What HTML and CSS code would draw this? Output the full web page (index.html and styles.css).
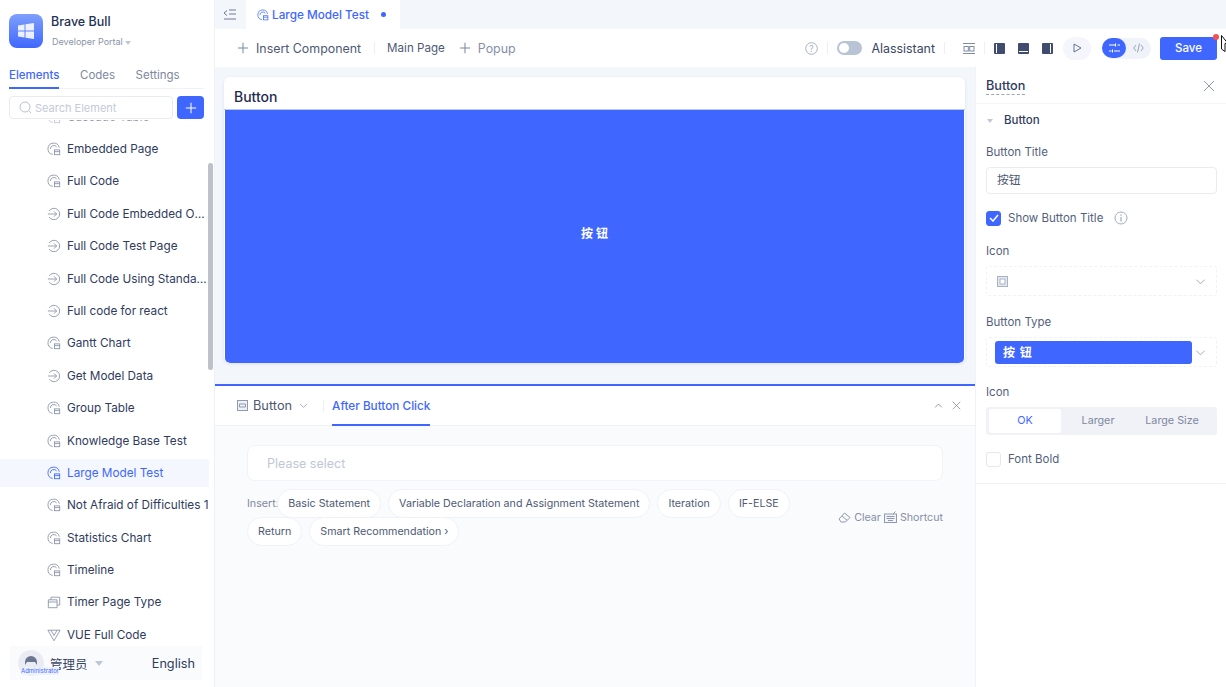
FILE: index.html
```html
<!DOCTYPE html>
<html lang="en">
<head>
    <meta charset="UTF-8">
    <title>Large Model Test</title>
    <link rel="stylesheet" href="styles.css">
</head>
<body>
<svg class="defs" width="0" height="0">
    <symbol id="i-page" viewBox="0 0 16 16"><path d="M14 6.5A6.5 6.5 0 1 0 6.5 14.2" fill="none" stroke="currentColor"/><path d="M3.8 8A4 4 0 0 1 11 5.6" fill="none" stroke="currentColor"/><rect x="8.5" y="9" width="6" height="5.5" fill="none" stroke="currentColor"/><path d="M8.5 11h6" stroke="currentColor"/></symbol>
    <symbol id="i-enter" viewBox="0 0 16 16"><path d="M2.5 4.5A6.5 6.5 0 1 1 2.5 11.5" fill="none" stroke="currentColor"/><path d="M1 8h10M8 5l3 3-3 3" fill="none" stroke="currentColor"/></symbol>
    <symbol id="i-timer" viewBox="0 0 16 16"><path d="M1.5 5.5h10v9h-10zM1.5 8h10M4.5 5.5v-3h10v9h-3" fill="none" stroke="currentColor"/></symbol>
    <symbol id="i-vue" viewBox="0 0 16 16"><path d="M1 2.5h14L8 14.5zM4.500 2.500L8 8.500l3.500-6" fill="none" stroke="currentColor"/></symbol>
    <symbol id="i-chev" viewBox="0 0 12 12"><path d="M1.500 4l4.500 4.500L10.500 4" fill="none" stroke="currentColor"/></symbol>
    <symbol id="i-plus" viewBox="0 0 14 14"><path d="M7 1v12M1 7h12" fill="none" stroke="currentColor" stroke-width="1.200"/></symbol>
    <symbol id="i-close" viewBox="0 0 12 12"><path d="M1 1l10 10M11 1L1 11" fill="none" stroke="currentColor"/></symbol>
</svg>

<div class="app">
    <aside class="sidebar">
        <div class="brand">
            <div class="logo">
                <svg width="18" height="18" viewBox="0 0 18 18"><path d="M1 3.500l6.500-1v6H1zM8.500 2.300L17 1v7.500H8.500zM1 9.500h6.500v6L1 14.500zM8.500 9.500H17V17L8.500 15.700z" fill="#fff" fill-opacity=".88"/></svg>
            </div>
            <div>
                <div class="brand-name">Brave Bull</div>
                <div class="brand-sub">Developer Portal <span class="caret"></span></div>
            </div>
        </div>
        <nav class="side-tabs">
            <span class="side-tab active">Elements</span>
            <span class="side-tab">Codes</span>
            <span class="side-tab">Settings</span>
        </nav>
        <div class="search-row">
            <div class="search">
                <svg width="13" height="13" viewBox="0 0 13 13"><circle cx="6" cy="6" r="5" fill="none" stroke="#b9c1d3"/><path d="M9.500 9.500l2.500 2.500" stroke="#b9c1d3"/></svg>
                <span>Search Element</span>
            </div>
            <div class="add-btn"><svg width="12" height="12"><use href="#i-plus"/></svg></div>
        </div>
        <div class="list-wrap">
            <ul class="el-list">
                <li class="faded"><svg><use href="#i-page"/></svg>Cascade Table</li>
                <li><svg><use href="#i-page"/></svg>Embedded Page</li>
                <li><svg><use href="#i-page"/></svg>Full Code</li>
                <li><svg><use href="#i-enter"/></svg><span class="clip">Full Code Embedded Outer Link</span></li>
                <li><svg><use href="#i-enter"/></svg>Full Code Test Page</li>
                <li><svg><use href="#i-enter"/></svg><span class="clip">Full Code Using Standard Page</span></li>
                <li><svg><use href="#i-enter"/></svg>Full code for react</li>
                <li><svg><use href="#i-page"/></svg>Gantt Chart</li>
                <li><svg><use href="#i-enter"/></svg>Get Model Data</li>
                <li><svg><use href="#i-page"/></svg>Group Table</li>
                <li><svg><use href="#i-page"/></svg>Knowledge Base Test</li>
                <li class="active"><svg><use href="#i-page"/></svg>Large Model Test</li>
                <li><svg><use href="#i-page"/></svg>Not Afraid of Difficulties 1</li>
                <li><svg><use href="#i-page"/></svg>Statistics Chart</li>
                <li><svg><use href="#i-page"/></svg>Timeline</li>
                <li><svg><use href="#i-timer"/></svg>Timer Page Type</li>
                <li><svg><use href="#i-vue"/></svg>VUE Full Code</li>
            </ul>
            <div class="scroll-thumb"></div>
        </div>
        <div class="user-bar">
            <div class="avatar">
                <svg width="14" height="9" viewBox="0 0 14 9"><path d="M1 9V6a6 6 0 0 1 12 0v3l-2-3H3z" fill="#6b7690"/></svg>
                <span class="avatar-tag">Administrator</span>
            </div>
            <span class="user-name">管理员</span>
            <span class="caret"></span>
            <span class="lang">English</span>
        </div>
    </aside>

    <main class="main">
        <div class="tabbar">
            <svg class="collapse" width="13" height="11" viewBox="0 0 13 11"><path d="M4 1.500L1 4l3 2.500M6 1h7M6 5h7M1 10h12" fill="none" stroke="#6f7a92"/></svg>
            <div class="tab">
                <svg width="12" height="12"><use href="#i-page"/></svg>
                <span>Large Model Test</span>
                <i class="dot"></i>
            </div>
        </div>

        <div class="toolbar">
            <div class="tool-left">
                <span class="insert"><svg width="12" height="12"><use href="#i-plus"/></svg>Insert Component</span>
                <span class="vsep"></span>
                <span class="main-page">Main Page</span>
                <span class="popup"><svg width="12" height="12"><use href="#i-plus"/></svg>Popup</span>
            </div>
            <div class="tool-right">
                <svg class="help" width="13" height="13" viewBox="0 0 13 13"><circle cx="6.500" cy="6.500" r="5.800" fill="none" stroke="#a6afc3"/><text x="6.500" y="9.500" text-anchor="middle" font-size="8.500" fill="#a6afc3">?</text></svg>
                <span class="vsep"></span>
                <span class="switch"><i></i></span>
                <span class="ai">Alassistant</span>
                <span class="vsep wide"></span>
                <svg width="12" height="11" viewBox="0 0 12 11"><path d="M0 .5h12M0 10.500h12" stroke="#7f8aa3"/><rect x="1" y="3.500" width="4.300" height="4.500" fill="none" stroke="#7f8aa3"/><rect x="6.700" y="3.500" width="4.300" height="4.500" fill="none" stroke="#7f8aa3"/></svg>
                <span class="vsep"></span>
                <span class="layout-ic left"></span>
                <span class="layout-ic bottom"></span>
                <span class="layout-ic right"></span>
                <span class="run"><svg width="9" height="10" viewBox="0 0 9 10"><path d="M1 1l7 4-7 4z" fill="none" stroke="#67748f"/></svg></span>
                <div class="mode">
                    <span class="mode-on"><svg width="11" height="10" viewBox="0 0 11 10"><path d="M0 2h6M8.500 2H11M0 8h2.500M5 8h6M6.500 .5v3M3.500 6.500v3" stroke="#fff"/></svg></span>
                    <span class="mode-off"><svg width="11" height="10" viewBox="0 0 11 10"><path d="M3 2L.7 5 3 8M8 2l2.300 3L8 8M6.500 .5l-2 9" fill="none" stroke="#97a2b8"/></svg></span>
                </div>
                <button class="save">Save<i class="save-dot"></i></button>
            </div>
        </div>

        <div class="workspace">
            <section class="center">
                <div class="canvas">
                    <div class="card">
                        <div class="card-title">Button</div>
                        <div class="big-btn">按 钮</div>
                    </div>
                </div>
                <div class="event-panel">
                    <div class="event-head">
                        <span class="comp-pick">
                            <svg width="11" height="11" viewBox="0 0 11 11"><rect x=".5" y=".5" width="10" height="10" fill="#eef1f6" stroke="#8f9ab0"/><path d="M2.500 4h6v3h-6z" fill="none" stroke="#8f9ab0"/></svg>
                            Button
                            <svg class="chev" width="9" height="9"><use href="#i-chev"/></svg>
                        </span>
                        <span class="vsep"></span>
                        <span class="event-tab">After Button Click</span>
                        <div class="event-tools">
                            <svg width="9" height="9" viewBox="0 0 12 12"><path d="M1.500 8.500L6 4l4.500 4.500" fill="none" stroke="#8d98ae" stroke-width="1.300"/></svg>
                            <svg width="9" height="9"><use href="#i-close"/></svg>
                        </div>
                    </div>
                    <div class="event-body">
                        <div class="select-box">Please select</div>
                        <div class="insert-row">
                            <div class="chips">
                                <span class="chip-label">Insert:</span>
                                <span class="chip">Basic Statement</span>
                                <span class="chip">Variable Declaration and Assignment Statement</span>
                                <span class="chip">Iteration</span>
                                <span class="chip">IF-ELSE</span>
                                <span class="chip">Return</span>
                                <span class="chip">Smart Recommendation ›</span>
                            </div>
                            <div class="shortcuts">
                                <svg width="13" height="11" viewBox="0 0 13 11"><path d="M1 7l5.500-6L12 5.500 7.500 10H3zM4 4l5 4.200" fill="none" stroke="#8f9ab0"/></svg><span>Clear</span>
                                <svg width="13" height="12" viewBox="0 0 13 12"><rect x=".5" y="3" width="12" height="8.500" fill="#f2f4f8" stroke="#8f9ab0"/><path d="M2.500 5.500h8M2.500 7.500h8M4 9.500h5M9 3l2.500-2.500" stroke="#8f9ab0"/></svg><span>Shortcut</span>
                            </div>
                        </div>
                    </div>
                </div>
            </section>

            <aside class="props">
                <div class="props-head">
                    <span class="props-title">Button</span>
                    <svg width="12" height="12" class="props-close"><use href="#i-close"/></svg>
                </div>
                <div class="props-body">
                    <div class="group-title"><span class="caret small"></span>Button</div>
                    <label class="field-label">Button Title</label>
                    <div class="input">按钮</div>
                    <div class="check-row">
                        <span class="check on"><svg width="10" height="8" viewBox="0 0 10 8"><path d="M1 4l3 3 5-6" fill="none" stroke="#fff" stroke-width="1.500"/></svg></span>
                        Show Button Title
                        <svg class="info" width="14" height="14" viewBox="0 0 14 14"><circle cx="7" cy="7" r="6" fill="none" stroke="#a3adc2"/><path d="M7 6v4.500M7 3.500v1.300" stroke="#8d98ae"/></svg>
                    </div>
                    <label class="field-label">Icon</label>
                    <div class="dashed-select">
                        <svg width="11" height="11" viewBox="0 0 11 11"><rect x=".5" y=".5" width="10" height="10" fill="#e4e8f0" stroke="#aab3c6"/><rect x="3" y="3" width="5" height="5" fill="#fff" stroke="#aab3c6"/></svg>
                        <svg class="chev" width="11" height="11"><use href="#i-chev"/></svg>
                    </div>
                    <label class="field-label">Button Type</label>
                    <div class="dashed-select type">
                        <span class="type-btn">按 钮</span>
                        <svg class="chev" width="11" height="11"><use href="#i-chev"/></svg>
                    </div>
                    <label class="field-label">Icon</label>
                    <div class="segment">
                        <span class="seg on">OK</span>
                        <span class="seg">Larger</span>
                        <span class="seg">Large Size</span>
                    </div>
                    <div class="check-row bold">
                        <span class="check"></span>
                        Font Bold
                    </div>
                </div>
            </aside>
        </div>
    </main>
</div>

<svg class="cursor" width="7" height="18" viewBox="0 0 7 18"><path d="M.5 .5L6.500 8 4 8.500v8L.5 14z" fill="#fff" stroke="#111"/></svg>
</body>
</html>
```

FILE: styles.css
```css
* { box-sizing: border-box; }
html, body {
    margin: 0;
    height: 100%;
    overflow: hidden;
}
body {
    font-family: Inter, "Noto Sans CJK SC", sans-serif;
    font-size: 11.750px;
    color: #2c3858;
    background: #fff;
}
.defs { position: absolute; }
.app {
    display: flex;
    width: 1226px;
    height: 687px;
    position: relative;
}
.vsep {
    display: inline-block;
    width: 1px;
    height: 12px;
    background: #eceff5;
}
.caret {
    display: inline-block;
    vertical-align: middle;
    border-left: 4px solid transparent;
    border-right: 4px solid transparent;
    border-top: 5px solid #c0c7d6;
}
.caret.small {
    border-left-width: 3.5px;
    border-right-width: 3.5px;
    border-top-width: 4px;
    margin-right: 11px;
}

/* sidebar */
.sidebar {
    width: 215px;
    flex: none;
    display: flex;
    flex-direction: column;
    border-right: 1px solid #eef1f7;
    padding-bottom: 7px;
}
.brand {
    display: flex;
    gap: 8px;
    padding: 14px 9px 0;
    height: 66px;
}
.logo {
    width: 34px;
    height: 34px;
    border-radius: 8px;
    background: linear-gradient(180deg, #7fa0fb, #3f67ff);
    display: flex;
    align-items: center;
    justify-content: center;
}
.brand-name {
    font-size: 12.500px;
    font-weight: 500;
    line-height: 15px;
    color: #233154;
}
.brand-sub {
    font-size: 9px;
    line-height: 12px;
    margin-top: 7px;
    margin-left: 1px;
    color: #8a94aa;
}
.brand-sub .caret {
    border-left-width: 3.500px;
    border-right-width: 3.500px;
    border-top-width: 4px;
}
.side-tabs {
    display: flex;
    gap: 20.500px;
    margin: 0 10px 0 9px;
    height: 23px;
    border-bottom: 1px solid #eef1f7;
    font-size: 11.500px;
}
.side-tab {
    color: #7d889f;
    line-height: 19px;
    height: 23px;
}
.side-tab.active {
    color: #3f67ff;
    font-weight: 500;
    border-bottom: 2px solid #3f67ff;
}
.search-row {
    display: flex;
    gap: 4px;
    padding: 7px 10px 0 9px;
    height: 31px;
}
.search {
    flex: 1;
    height: 23px;
    border: 1px solid #e8ebf3;
    border-radius: 4px;
    display: flex;
    align-items: center;
    gap: 3px;
    padding-left: 9px;
    font-size: 11px;
    color: #c3cad9;
}
.add-btn {
    width: 27px;
    height: 23px;
    border-radius: 4px;
    background: #3f67ff;
    color: #fff;
    display: flex;
    align-items: center;
    justify-content: center;
}
.list-wrap {
    flex: 1;
    min-height: 0;
    overflow: hidden;
    position: relative;
}
.el-list {
    list-style: none;
    margin: -19.600px 0 0;
    padding: 0 5px 0 0;
}
.el-list li {
    display: flex;
    align-items: center;
    height: 32.400px;
    padding-left: 47px;
    white-space: nowrap;
    color: #2f3b5e;
}
.el-list li svg {
    width: 14px;
    height: 14px;
    margin-right: 6px;
    flex: none;
    color: #8993a9;
}
.el-list li.faded { opacity: .5; }
.el-list li.active {
    background: #f4f7fd;
    background-clip: padding-box;
    border-top: 2px solid transparent;
    border-bottom: 2px solid transparent;
    color: #3f67ff;
}
.el-list li.active svg { color: #3f67ff; }
.clip {
    overflow: hidden;
    text-overflow: ellipsis;
}
.scroll-thumb {
    position: absolute;
    left: 208px;
    top: 43px;
    width: 5px;
    height: 207px;
    border-radius: 3px;
    background: #bcc1ca;
}
.user-bar {
    height: 34px;
    margin: 0 12px 0 10px;
    background: #fafbfd;
    display: flex;
    align-items: center;
    padding: 0 7px 0 8px;
    flex: none;
}
.avatar {
    width: 26px;
    height: 26px;
    border-radius: 50%;
    background: #e9ecf2;
    position: relative;
    display: flex;
    justify-content: center;
    padding-top: 6px;
    margin-right: 6px;
}
.avatar-tag {
    position: absolute;
    left: 3px;
    top: 17px;
    font-size: 6px;
    line-height: 8px;
    color: #3f67ff;
    background: #eef2fe;
    white-space: nowrap;
}
.user-name {
    font-size: 12.500px;
    color: #3a4665;
    margin-right: 7px;
}
.lang {
    margin-left: auto;
    font-size: 12.700px;
    color: #2f3b5e;
}

/* main */
.main {
    flex: 1;
    min-width: 0;
    display: flex;
    flex-direction: column;
}
.tabbar {
    height: 29px;
    background: #f3f6fb;
    display: flex;
    align-items: center;
    padding-left: 8px;
    flex: none;
}
.collapse { margin-right: 10px; }
.tab {
    width: 154px;
    height: 29px;
    background: #fff;
    display: flex;
    align-items: center;
    padding-left: 11px;
    gap: 3px;
    color: #3f67ff;
    font-weight: 500;
    font-size: 11.750px;
}
.dot {
    width: 5px;
    height: 5px;
    border-radius: 50%;
    background: #3f67ff;
    margin-left: 9px;
}
.toolbar {
    height: 38px;
    display: flex;
    align-items: center;
    justify-content: space-between;
    padding: 0 9px 0 22px;
    flex: none;
}
.tool-left, .tool-right {
    display: flex;
    align-items: center;
}
.insert {
    display: flex;
    align-items: center;
    gap: 7px;
    font-size: 12.400px;
    color: #4d5975;
}
.insert svg, .popup svg { color: #7d889f; }
.tool-left .vsep { margin: 0 12px 0 13px; }
.main-page { color: #4d5975; font-size: 11.600px; }
.popup {
    display: flex;
    align-items: center;
    gap: 7px;
    margin-left: 14px;
    font-size: 12.400px;
    color: #8590a8;
}
.tool-right .vsep { margin: 0 9px; }
.tool-right .vsep.wide { margin-right: 18px; }
.switch {
    width: 25px;
    height: 14px;
    border-radius: 7px;
    background: #b9c3d6;
    padding: 2px;
    display: block;
}
.switch i {
    display: block;
    width: 10px;
    height: 10px;
    border-radius: 50%;
    background: #fff;
}
.ai {
    margin-left: 9px;
    font-size: 12.400px;
    color: #3a4665;
}
.layout-ic {
    width: 11px;
    height: 11px;
    background: #3f4c70;
    border-radius: 1px;
    margin-right: 13px;
    position: relative;
}
.layout-ic::after {
    content: "";
    position: absolute;
    background: #fff;
}
.layout-ic.left::after { left: 2px; top: 1px; width: 1px; height: 9px; }
.layout-ic.bottom::after { left: 1px; bottom: 2px; width: 9px; height: 1px; }
.layout-ic.right::after { right: 2px; top: 1px; width: 1px; height: 9px; }
.run {
    width: 28px;
    height: 23px;
    border-radius: 12px;
    background: #f4f6fb;
    display: flex;
    align-items: center;
    justify-content: center;
    margin: 0 11px 0 -3px;
}
.mode {
    width: 49px;
    height: 21px;
    border-radius: 11px;
    background: #f0f3f9;
    display: flex;
    align-items: center;
}
.mode-on {
    width: 24px;
    height: 20px;
    border-radius: 10px;
    background: #3f67ff;
    display: flex;
    align-items: center;
    justify-content: center;
}
.mode-off {
    flex: 1;
    display: flex;
    align-items: center;
    justify-content: center;
}
.save {
    width: 57px;
    height: 23px;
    margin-left: 9px;
    border: 0;
    border-radius: 3px;
    background: #3f67ff;
    color: #fff;
    font-family: inherit;
    font-size: 11.500px;
    font-weight: 500;
    padding: 0;
    position: relative;
}
.save-dot {
    position: absolute;
    right: -2px;
    top: -3px;
    width: 6px;
    height: 6px;
    border-radius: 50%;
    background: #f5524f;
}
.workspace {
    flex: 1;
    min-height: 0;
    display: flex;
}
.center {
    flex: 1;
    min-width: 0;
    display: flex;
    flex-direction: column;
    background: #f3f6fb;
}
.canvas {
    height: 317px;
    padding: 10px 10px 0 9px;
    flex: none;
}
.card {
    height: 286px;
    border-radius: 6px;
    background: #fff;
    overflow: hidden;
    box-shadow: 0 1px 3px rgba(60, 80, 130, .12);
    display: flex;
    flex-direction: column;
}
.card-title {
    height: 33px;
    flex: none;
    padding-left: 10px;
    font-size: 14px;
    font-weight: 500;
    line-height: 40px;
    color: #1f2b4d;
    border-bottom: 1px solid #b8c6fa;
}
.big-btn {
    flex: 1;
    margin: 0 1px;
    padding-bottom: 8px;
    background: #3f67ff;
    color: #fff;
    font-size: 12px;
    font-weight: 700;
    display: flex;
    align-items: center;
    justify-content: center;
    border-radius: 0 0 5px 5px;
}
.event-panel {
    flex: 1;
    background: #fafbfd;
    border-top: 2px solid #3f67ff;
    display: flex;
    flex-direction: column;
}
.event-head {
    height: 40px;
    flex: none;
    display: flex;
    align-items: center;
    padding: 0 14px 0 22px;
    background: #fff;
    border-bottom: 1px solid #f0f2f8;
}
.comp-pick {
    display: flex;
    align-items: center;
    gap: 5px;
    font-size: 12.800px;
    color: #4d5975;
}
.comp-pick .chev { color: #8d98ae; margin-left: 2px; }
.event-head .vsep { margin: 0 8px 0 15px; }
.event-tab {
    height: 40px;
    line-height: 40px;
    color: #3f67ff;
    font-weight: 500;
    border-bottom: 2px solid #3f67ff;
}
.event-tools {
    margin-left: auto;
    display: flex;
    gap: 9px;
    color: #7d889f;
}
.event-body { padding: 19px 32px 0; }
.select-box {
    height: 36px;
    border: 1px solid #f1f3f8;
    border-radius: 8px;
    background: #fff;
    padding-left: 19px;
    line-height: 35px;
    font-size: 12.500px;
    color: #c0c7d7;
}
.insert-row {
    display: flex;
    align-items: center;
    margin-top: 8px;
}
.chips {
    width: 580px;
    flex: none;
    display: flex;
    flex-wrap: wrap;
    align-items: center;
    gap: 0 7px;
}
.chip-label {
    font-size: 10.700px;
    color: #7d889f;
    margin-right: -8.500px;
}
.chip {
    height: 29px;
    line-height: 27px;
    margin-bottom: -1px;
    padding: 0 10px;
    border-radius: 15px;
    border: 1px solid #f0f2f8;
    background: #fff;
    font-size: 10.700px;
    color: #4d5975;
    white-space: nowrap;
}
.shortcuts {
    margin-left: auto;
    display: flex;
    align-items: center;
    gap: 3px;
    font-size: 10.700px;
    color: #8590a8;
    white-space: nowrap;
}

/* props */
.props {
    width: 251px;
    flex: none;
    border-left: 1px solid #f0f2f8;
    background: #fff;
}
.props-head {
    height: 37px;
    padding-top: 2px;
    display: flex;
    align-items: center;
    justify-content: space-between;
    padding-right: 11px;
    padding-left: 10px;
    border-bottom: 1px solid #f3f5f9;
}
.props-title {
    font-size: 12.700px;
    font-weight: 500;
    color: #2f3b5e;
    border-bottom: 1px dashed #9aa4ba;
    line-height: 16px;
}
.props-close { color: #8f9ab0; }
.props-body {
    padding: 0 9px 16px 10px;
    border-bottom: 1px solid #f0f2f8;
}
.group-title {
    height: 32px;
    line-height: 32px;
    padding-left: 1px;
    font-weight: 500;
    font-size: 11.500px;
    color: #2f3b5e;
}
.field-label {
    display: block;
    line-height: 16px;
    margin-top: 8px;
    color: #535f7c;
    font-size: 11.500px;
}
.input {
    height: 27px;
    margin-top: 7px;
    border: 1px solid #e8ebf3;
    border-radius: 4px;
    padding-left: 10px;
    line-height: 25px;
    color: #4d5975;
}
.check-row {
    display: flex;
    align-items: center;
    gap: 7px;
    height: 16px;
    margin-top: 16px;
    color: #535f7c;
    font-size: 11.500px;
}
.check {
    width: 15px;
    height: 15px;
    border-radius: 3px;
    border: 1px solid #e4e7ef;
    display: flex;
    align-items: center;
    justify-content: center;
}
.check.on {
    background: #3f67ff;
    border-color: #3f67ff;
}
.info { margin-left: 4px; }
.check-row + .field-label { margin-top: 17px; }
.dashed-select {
    height: 30px;
    margin-top: 7px;
    border: 1px dashed #f0f2f7;
    border-radius: 3px;
    display: flex;
    align-items: center;
    justify-content: space-between;
    padding: 0 10px;
    color: #97a2b8;
}
.dashed-select + .field-label { margin-top: 18px; }
.dashed-select.type { padding: 0 10px 0 8px; }
.type-btn {
    width: 197px;
    height: 23px;
    border-radius: 3px;
    background: #3f67ff;
    color: #fff;
    font-size: 12px;
    font-weight: 700;
    letter-spacing: 1px;
    line-height: 23px;
    padding-left: 8px;
}
.dashed-select.type + .field-label { margin-top: 17px; }
.segment {
    height: 28px;
    margin-top: 7px;
    background: #f0f2f7;
    border-radius: 3px;
    padding: 2px 8px 2px 3px;
    display: flex;
}
.seg {
    flex: 1;
    text-align: center;
    line-height: 24px;
    color: #7d889f;
    font-size: 10.750px;
}
.seg.on {
    background: #fff;
    color: #3f67ff;
    border-radius: 2px;
    flex: none;
    width: 72px;
}
.check-row.bold { margin-top: 16px; }

.cursor {
    position: absolute;
    left: 1221px;
    top: 35px;
}
```
